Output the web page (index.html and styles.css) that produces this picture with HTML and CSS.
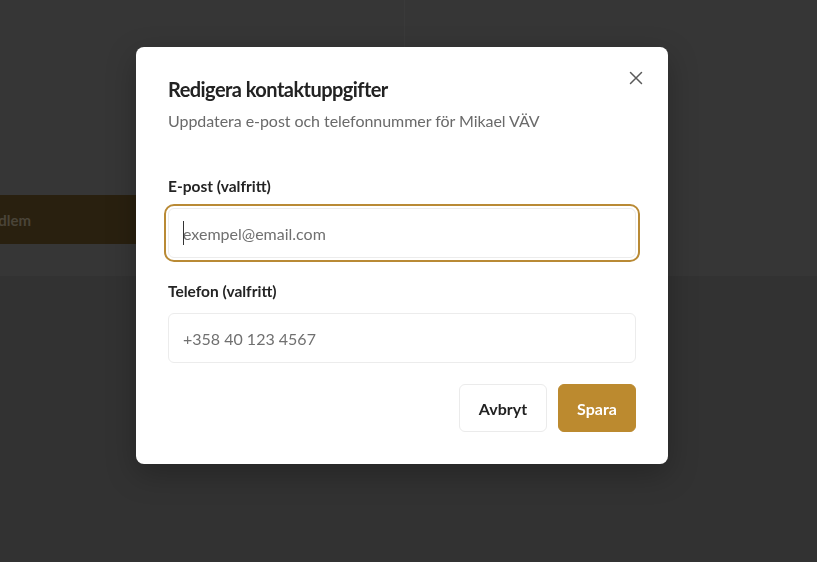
FILE: index.html
```html
<!DOCTYPE html>
<html lang="sv">
<head>
<meta charset="utf-8">
<title>Redigera kontaktuppgifter</title>
<link rel="stylesheet" href="styles.css">
</head>
<body>
<div class="page">
  <div class="panel">
    <div class="col col-left">
      <div class="add-bar"><span class="add-label">Lägg till medlem</span></div>
    </div>
    <div class="col col-right"></div>
  </div>
</div>

<div class="overlay">
  <div class="modal" role="dialog" aria-labelledby="dlg-title">
    <button class="close" aria-label="Stäng">
      <svg width="14" height="14" viewBox="0 0 14 14" fill="none" stroke="#5a5a5a" stroke-width="1.5" stroke-linecap="round">
        <path d="M1.5 1.5 L12.5 12.5 M12.5 1.5 L1.5 12.5"/>
      </svg>
    </button>
    <h2 class="title" id="dlg-title">Redigera kontaktuppgifter</h2>
    <p class="subtitle">Uppdatera e-post och telefonnummer för Mikael VÄV</p>

    <form class="form">
      <div class="group">
        <label class="label" for="email">E-post (valfritt)</label>
        <div class="field is-focused">
          <input class="input" id="email" type="email" placeholder="exempel@email.com">
        </div>
      </div>
      <div class="group">
        <label class="label" for="phone">Telefon (valfritt)</label>
        <div class="field">
          <input class="input" id="phone" type="tel" placeholder="+358 40 123 4567">
        </div>
      </div>
      <div class="actions">
        <button type="button" class="btn btn-ghost">Avbryt</button>
        <button type="button" class="btn btn-primary">Spara</button>
      </div>
    </form>
  </div>
</div>
</body>
</html>
```

FILE: styles.css
```css
* { box-sizing: border-box; }

html, body {
  margin: 0;
  padding: 0;
  height: 100%;
}

body {
  background: #323232;
  font-family: Lato, "Noto Sans", sans-serif;
  overflow: hidden;
}

.page {
  width: 100%;
}

.panel {
  display: flex;
  height: 276px;
  background: #363636;
}

.col {
  height: 100%;
}

.col-left {
  width: 405px;
  padding-top: 195px;
  border-right: 1px solid #3a3a3a;
}

.col-right {
  flex: 1;
}

.add-bar {
  height: 49px;
  background: #29200f;
  display: flex;
  align-items: center;
  overflow: hidden;
  white-space: nowrap;
}

.add-label {
  margin-left: -78px;
  font-weight: 700;
  font-size: 15px;
  color: #4a4438;
}

.overlay {
  position: fixed;
  inset: 0;
  display: flex;
  align-items: flex-start;
  padding: 47px 0 0 136px;
}

.modal {
  position: relative;
  width: 532px;
  background: #fff;
  border-radius: 8px;
  padding: 28px 32px 32px;
  box-shadow: 0 10px 30px rgba(0, 0, 0, 0.25);
}

.close {
  position: absolute;
  top: 24px;
  right: 25px;
  width: 14px;
  height: 14px;
  padding: 0;
  border: 0;
  background: none;
  display: flex;
}

.title {
  margin: 0;
  font-size: 20px;
  line-height: 28px;
  font-weight: 700;
  color: #222;
  letter-spacing: -0.55px;
}

.subtitle {
  margin: 7px 0 0;
  font-size: 16px;
  line-height: 22px;
  color: #6a6a6a;
  letter-spacing: -0.05px;
}

.form {
  margin-top: 44px;
  display: flex;
  flex-direction: column;
  gap: 23px;
}

.group {
  display: flex;
  flex-direction: column;
  gap: 12px;
}

.label {
  font-size: 15.5px;
  line-height: 20px;
  font-weight: 700;
  color: #242424;
}

.field {
  position: relative;
  height: 50px;
  border-radius: 7px;
}

.field.is-focused {
  outline: 2px solid #b98a35;
  outline-offset: 2px;
  border-radius: 6px;
}

.field.is-focused::after {
  content: "";
  position: absolute;
  left: 15px;
  top: 13px;
  width: 1px;
  height: 24px;
  background: #333;
}

.input {
  width: 100%;
  height: 100%;
  border: 1px solid #ececec;
  border-radius: 6px;
  padding: 0 14px;
  font-family: inherit;
  font-size: 16px;
  color: #333;
  background: #fff;
  outline: none;
}

.input::placeholder {
  color: #707070;
}

.actions {
  display: flex;
  justify-content: flex-end;
  gap: 11px;
  margin-top: -2px;
}

.btn {
  height: 48px;
  border-radius: 6px;
  font-family: inherit;
  font-weight: 700;
  font-size: 16px;
  cursor: pointer;
}

.btn-ghost {
  width: 88px;
  background: #fff;
  border: 1px solid #ebebeb;
  color: #222;
}

.btn-primary {
  width: 78px;
  background: #bc8a2f;
  border: 1px solid #bc8a2f;
  color: #fff;
}
```
